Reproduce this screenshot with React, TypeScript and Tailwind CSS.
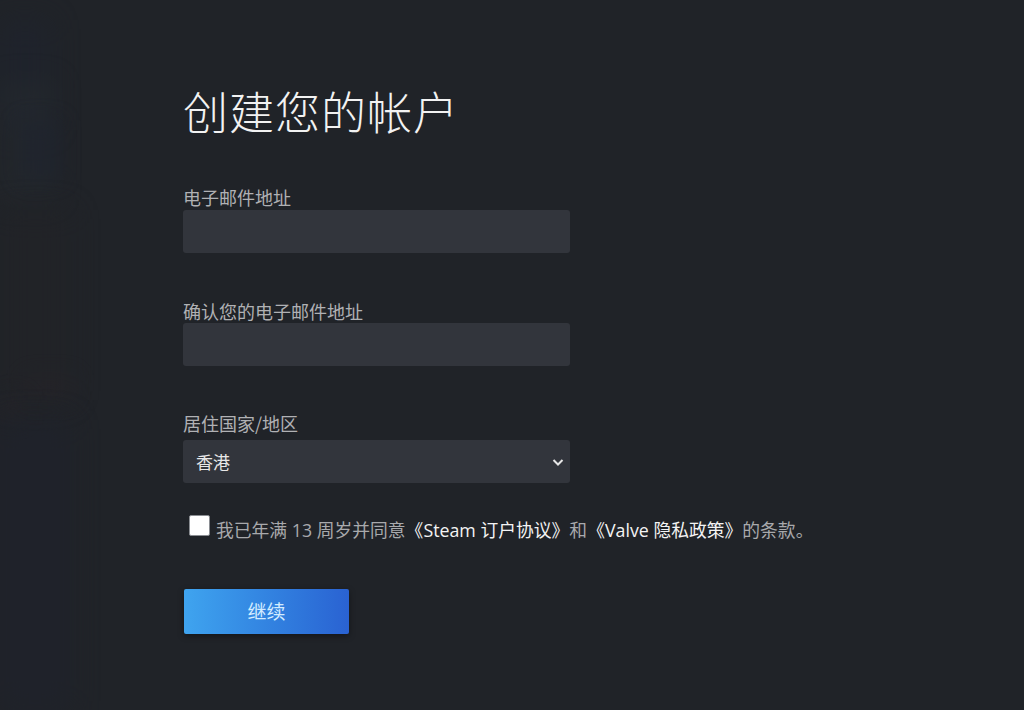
import React from "react";

const font = '"Noto Sans CJK SC", "Noto Sans", sans-serif';

export default function App() {
  return (
    <div
      className="relative w-[1024px] h-[710px] overflow-hidden bg-[#202328]"
      style={{ fontFamily: font }}
    >
      {/* faint blurred background art on the left */}
      <div className="absolute inset-0 pointer-events-none">
        <div className="absolute left-0 top-[20px] w-[50px] h-[110px] bg-[#1e2330] blur-[14px] opacity-50" />
        <div className="absolute left-0 top-[80px] w-[55px] h-[120px] bg-[#262b2f] blur-[12px] opacity-50" />
        <div className="absolute left-[20px] top-[120px] w-[40px] h-[60px] bg-[#1e2330] blur-[10px] opacity-50" />
        <div className="absolute left-0 top-[210px] w-[70px] h-[190px] bg-[#232327] blur-[14px] opacity-50" />
        <div className="absolute left-[25px] top-[375px] w-[50px] h-[25px] bg-[#28242a] blur-[10px] opacity-40" />
        <div className="absolute left-0 top-[395px] w-[25px] h-[25px] bg-[#29242a] blur-[10px] opacity-40" />
        <div className="absolute left-0 top-[420px] w-[70px] h-[290px] bg-[#1f222d] blur-[14px] opacity-50" />
      </div>

      <div className="relative flex flex-col pl-[183px] pt-[84px]">
        <h1 className="text-[45px] leading-[54px] font-light text-[#f2f2f2] tracking-[1px]">
          创建您的帐户
        </h1>

        <label className="mt-[47px] text-[18px] leading-[24px] text-[#b0b1b4]">
          电子邮件地址
        </label>
        <div className="mt-[1px] w-[387px] h-[43px] rounded-[3px] bg-[#32353c]" />

        <label className="mt-[46px] text-[18px] leading-[24px] text-[#b0b1b4]">
          确认您的电子邮件地址
        </label>
        <div className="w-[387px] h-[43px] rounded-[3px] bg-[#32353c]" />

        <label className="mt-[45px] text-[18px] leading-[24px] text-[#b0b1b4]">
          居住国家/地区
        </label>
        <div className="mt-[5px] w-[387px] h-[43px] rounded-[3px] bg-[#32353c] flex items-center justify-between pl-[13px] pr-[5px]">
          <span className="text-[17px] text-[#e8e8e8]">香港</span>
          <svg width="14" height="14" viewBox="0 0 14 14">
            <path d="M2.5 5 L7 9.5 L11.5 5" fill="none" stroke="#e6e6e6" strokeWidth="2" />
          </svg>
        </div>

        <div className="mt-[32px] flex items-start">
          <div className="ml-[6px] w-[21px] h-[21px] rounded-[2px] bg-white border border-[#8a8d92]" />
          <p
            className="ml-[6px] mt-[3px] text-[17.8px] leading-[24px] text-[#a8a9ac] whitespace-nowrap"
            style={{ fontFamily: '"Open Sans", "Noto Sans CJK SC", sans-serif' }}
          >
            我已年满 13 周岁并同意
            <span className="text-[#f4f4f4]">《Steam 订户协议》</span>
            和
            <span className="text-[#f4f4f4]">《Valve 隐私政策》</span>
            的条款。
          </p>
        </div>

        <button className="mt-[47px] ml-[1px] w-[165px] h-[45px] rounded-[2px] bg-gradient-to-r from-[#3fa4ef] to-[#2a62d2] text-[19px] text-[#d3ecff] shadow-[0_2px_6px_rgba(0,0,0,0.4)]">
          继续
        </button>
      </div>
    </div>
  );
}
